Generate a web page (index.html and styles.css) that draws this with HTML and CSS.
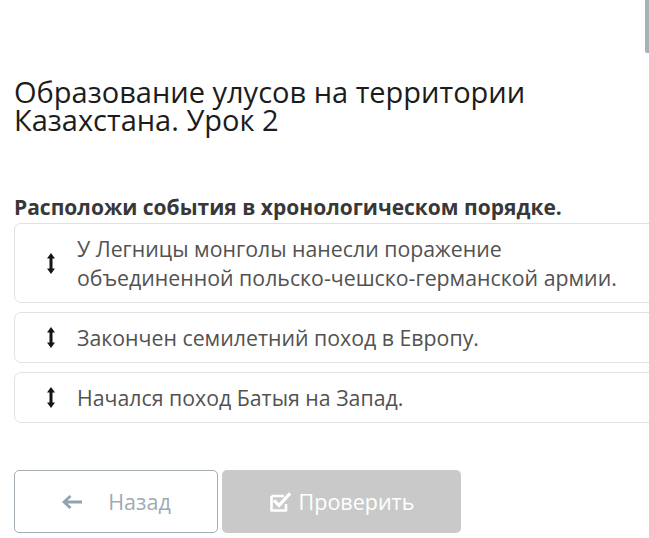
FILE: index.html
```html
<!DOCTYPE html>
<html lang="ru">
<head>
<meta charset="utf-8">
<title>Образование улусов</title>
<link rel="stylesheet" href="styles.css">
</head>
<body>
<div class="scroll-tab"></div>
<main class="page">
  <h1 class="title">Образование улусов на территории Казахстана. Урок 2</h1>
  <p class="question">Расположи события в хронологическом порядке.</p>
  <ul class="list">
    <li class="item">
      <svg class="drag" viewBox="0 0 8 21" width="8" height="21"><polygon points="4,0 8,5.5 5.5,5.5 5.5,15.5 8,15.5 4,21 0,15.5 2.5,15.5 2.5,5.5 0,5.5"/></svg>
      <span class="text">У Легницы монголы нанесли поражение объединенной польско-чешско-германской армии.</span>
    </li>
    <li class="item">
      <svg class="drag" viewBox="0 0 8 21" width="8" height="21"><polygon points="4,0 8,5.5 5.5,5.5 5.5,15.5 8,15.5 4,21 0,15.5 2.5,15.5 2.5,5.5 0,5.5"/></svg>
      <span class="text">Закончен семилетний поход в Европу.</span>
    </li>
    <li class="item">
      <svg class="drag" viewBox="0 0 8 21" width="8" height="21"><polygon points="4,0 8,5.5 5.5,5.5 5.5,15.5 8,15.5 4,21 0,15.5 2.5,15.5 2.5,5.5 0,5.5"/></svg>
      <span class="text">Начался поход Батыя на Запад.</span>
    </li>
  </ul>
  <div class="actions">
    <button class="btn btn-back" type="button">
      <svg class="arrow" viewBox="0 0 22 16" width="22" height="16"><path d="M1 8 L8.5 1 L10.5 3 L6.5 6.5 L21 6.5 L21 9.5 L6.5 9.5 L10.5 13 L8.5 15 Z"/></svg>
      <span>Назад</span>
    </button>
    <button class="btn btn-check" type="button">
      <svg class="check" viewBox="0 0 24 22" width="24" height="22"><path d="M2.5 5 H15 M2.5 5 V19.5 H17 V13" fill="none" stroke="#fff" stroke-width="2.6" stroke-linejoin="round"/><path d="M6 10.5 L10 14.5 L20 3.5" fill="none" stroke="#fff" stroke-width="3.2" stroke-linecap="square"/></svg>
      <span>Проверить</span>
    </button>
  </div>
</main>
</body>
</html>
```
FILE: styles.css
```css
html, body {
  margin: 0;
  padding: 0;
  background: #fff;
  overflow: hidden;
}
body {
  font-family: "Open Sans", "Noto Sans", sans-serif;
  width: 649px;
  height: 538px;
  position: relative;
}
.scroll-tab {
  position: absolute;
  top: 0;
  right: 0;
  width: 4px;
  height: 53px;
  background: #a9b1b8;
  border-radius: 0 0 0 2px;
}
.page {
  padding: 78px 0 0 14px;
}
.title {
  margin: 0;
  font-size: 29px;
  line-height: 28px;
  font-weight: 400;
  color: #1c1c1c;
  width: 580px;
}
.question {
  margin: 61px 0 0;
  font-size: 21px;
  line-height: 24px;
  font-weight: 700;
  color: #383838;
  white-space: nowrap;
}
.list {
  list-style: none;
  margin: 4px 0 0;
  padding: 0;
  width: 660px;
  display: flex;
  flex-direction: column;
  gap: 9px;
}
.item {
  display: flex;
  align-items: center;
  gap: 22px;
  padding: 10px 0 10px 32px;
  border: 1px solid #e2e2e2;
  border-radius: 7px;
  background: #fff;
}
.drag {
  flex: none;
  fill: #151515;
}
.text {
  font-size: 21.3px;
  line-height: 29px;
  color: #525252;
  width: 560px;
}
.actions {
  margin-top: 47px;
  display: flex;
  gap: 4px;
}
.btn {
  height: 63px;
  border-radius: 5px;
  display: flex;
  align-items: center;
  justify-content: center;
  font-family: "Open Sans", "Noto Sans", sans-serif;
  font-size: 21.5px;
  padding: 0;
  box-sizing: border-box;
}
.btn-back {
  width: 204px;
  background: #fff;
  border: 1px solid #a5aeb3;
  color: #9eabb2;
  gap: 25px;
}
.arrow {
  fill: #8fa4b2;
}
.btn-check {
  width: 239px;
  background: #c9c9c9;
  border: none;
  color: #fff;
  gap: 6px;
}
```
